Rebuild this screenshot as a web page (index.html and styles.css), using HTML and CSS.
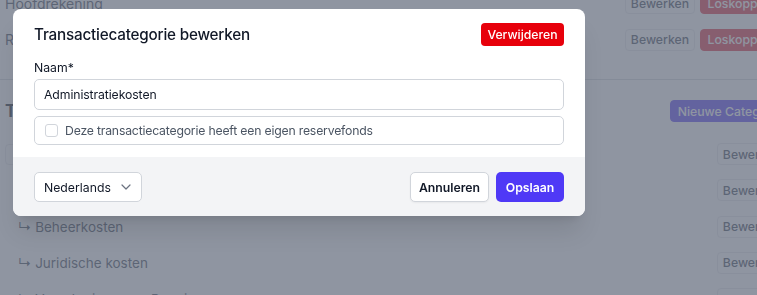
FILE: index.html
```html
<!DOCTYPE html>
<html>
<head>
    <title>Transactiecategorie bewerken</title>
    <link rel="stylesheet" href="styles.css">
</head>
<body>
    <div class="page">
        <div class="account-list">
            <div class="account-row">
                <span>Hoofdrekening</span>
                <div class="actions">
                    <button class="btn">Bewerken</button>
                    <button class="btn btn-red">Loskoppelen</button>
                </div>
            </div>
            <div class="account-row">
                <span>Reserverekening</span>
                <div class="actions">
                    <button class="btn">Bewerken</button>
                    <button class="btn btn-red">Loskoppelen</button>
                </div>
            </div>
        </div>

        <hr class="divider">

        <div class="section-head">
            <h2>Transactiecategorieën</h2>
            <button class="btn btn-indigo">Nieuwe Categorie</button>
        </div>

        <div class="cat-list">
            <div class="cat-row">
                <div class="search-box">Zoeken</div>
                <button class="btn">Bewerken</button>
            </div>
            <div class="cat-row">
                <span class="sub">&#8627; Administratiekosten</span>
                <button class="btn">Bewerken</button>
            </div>
            <div class="cat-row">
                <span class="sub">&#8627; Beheerkosten</span>
                <button class="btn">Bewerken</button>
            </div>
            <div class="cat-row">
                <span class="sub">&#8627; Juridische kosten</span>
                <button class="btn">Bewerken</button>
            </div>
            <div class="cat-row">
                <span class="sub">&#8627; Verzekeringen en Premies</span>
                <button class="btn">Bewerken</button>
            </div>
        </div>
    </div>

    <div class="overlay"></div>

    <div class="modal">
        <div class="modal-body">
            <div class="modal-head">
                <h3>Transactiecategorie bewerken</h3>
                <button class="btn-delete">Verwijderen</button>
            </div>

            <div class="field">
                <label for="name">Naam*</label>
                <input id="name" class="text-input" value="Administratiekosten">
            </div>

            <label class="check-box">
                <span class="checkbox"></span>
                Deze transactiecategorie heeft een eigen reservefonds
            </label>
        </div>

        <div class="modal-footer">
            <div class="lang-select">
                <span>Nederlands</span>
                <svg width="10" height="6" viewBox="0 0 10 6"><path d="M1 1l4 4 4-4" fill="none" stroke="#6b7280" stroke-width="1.2" stroke-linecap="round" stroke-linejoin="round"/></svg>
            </div>
            <div class="footer-actions">
                <button class="btn-cancel">Annuleren</button>
                <button class="btn-save">Opslaan</button>
            </div>
        </div>
    </div>
</body>
</html>
```

FILE: styles.css
```css
html, body {
    margin: 0;
    height: 100%;
    overflow: hidden;
}

body {
    background: #ffffff;
    font-family: Inter, "Noto Sans", sans-serif;
    color: #374151;
}

.page {
    width: 785px;
    margin-top: -15px;
    padding-left: 5px;
}

.account-row {
    height: 36.5px;
    display: flex;
    align-items: center;
    justify-content: space-between;
    font-size: 14px;
}

.actions {
    display: flex;
    gap: 5px;
}

.btn {
    box-sizing: border-box;
    width: 70px;
    height: 22px;
    padding: 0;
    font-family: inherit;
    font-size: 12.25px;
    font-weight: 500;
    white-space: nowrap;
    color: #374151;
    background: #ffffff;
    border: 1px solid #e5e7eb;
    border-radius: 4px;
}

.btn-red {
    background: #e0263a;
    border-color: #e0263a;
    color: #ffffff;
    width: 90px;
}

.btn-indigo {
    background: #4f39f6;
    border-color: #4f39f6;
    color: #ffffff;
    width: 120px;
}

.divider {
    margin: 21px 0 20px -5px;
    border: 0;
    border-top: 1px solid #d1d5db;
}

.section-head {
    height: 22px;
    display: flex;
    align-items: center;
    justify-content: space-between;
}

.section-head h2 {
    margin: 0;
    font-size: 17px;
    font-weight: 700;
    color: #111827;
}

.cat-list {
    margin-top: 14px;
    padding-right: 3px;
}

.cat-row {
    height: 36.25px;
    display: flex;
    align-items: center;
    justify-content: space-between;
    font-size: 13.5px;
}

.cat-row .sub {
    padding-left: 13px;
}

.search-box {
    width: 220px;
    height: 19px;
    border: 1px solid #e5e7eb;
    border-radius: 4px;
    font-size: 12px;
    line-height: 19px;
    padding-left: 8px;
    color: #9ca3af;
}

.overlay {
    position: fixed;
    inset: 0;
    background: rgba(106, 114, 130, 0.75);
}

.modal {
    position: absolute;
    left: 13px;
    top: 9px;
    width: 572px;
    background: #ffffff;
    border-radius: 8px;
    overflow: hidden;
    box-shadow: 0 20px 25px -5px rgba(0, 0, 0, 0.1), 0 8px 10px -6px rgba(0, 0, 0, 0.1);
    color: #111827;
}

.modal-body {
    padding: 14px 21px 12px;
}

.modal-head {
    height: 23px;
    display: flex;
    align-items: center;
    justify-content: space-between;
}

.modal-head h3 {
    margin: 0;
    font-size: 15.25px;
    font-weight: 500;
    letter-spacing: -0.2px;
    color: #111827;
}

.btn-delete {
    height: 23px;
    width: 83px;
    padding: 0;
    font-family: inherit;
    font-size: 12.25px;
    font-weight: 500;
    color: #ffffff;
    background: #e7000b;
    border: 0;
    border-radius: 4px;
}

.field {
    margin-top: 13px;
}

.field label {
    display: block;
    font-size: 12.25px;
    line-height: 17.5px;
    margin-bottom: 2.5px;
    color: #111827;
}

.text-input {
    box-sizing: border-box;
    width: 100%;
    height: 31px;
    padding: 0 9px;
    font-family: inherit;
    font-size: 12.25px;
    letter-spacing: -0.1px;
    color: #111827;
    border: 1px solid #d1d5db;
    border-radius: 5px;
    outline: none;
}

.check-box {
    box-sizing: border-box;
    margin-top: 6px;
    height: 29px;
    display: flex;
    align-items: center;
    gap: 7px;
    padding-left: 10px;
    border: 1px solid #d1d5db;
    border-radius: 5px;
    font-size: 12.25px;
    letter-spacing: -0.2px;
    color: #4b5563;
}

.checkbox {
    box-sizing: border-box;
    width: 13px;
    height: 13px;
    border: 1px solid #d1d5db;
    border-radius: 3px;
    background: #ffffff;
}

.modal-footer {
    background: #f3f4f6;
    padding: 15px 21px 14px;
    display: flex;
    align-items: center;
    justify-content: space-between;
}

.lang-select {
    box-sizing: border-box;
    width: 108px;
    height: 30px;
    display: flex;
    align-items: center;
    justify-content: space-between;
    padding: 0 10px 0 9px;
    background: #ffffff;
    border: 1px solid #d1d5db;
    border-radius: 5px;
    font-size: 12.25px;
    color: #111827;
}

.footer-actions {
    display: flex;
    gap: 7px;
}

.btn-cancel,
.btn-save {
    height: 30px;
    font-family: inherit;
    font-size: 12.25px;
    font-weight: 600;
    border-radius: 5px;
}

.btn-cancel {
    width: 79px;
    background: #ffffff;
    color: #111827;
    border: 1px solid #d1d5db;
    box-shadow: 0 1px 2px rgba(0, 0, 0, 0.05);
}

.btn-save {
    width: 68px;
    background: #4f39f6;
    color: #ffffff;
    border: 0;
}
```
